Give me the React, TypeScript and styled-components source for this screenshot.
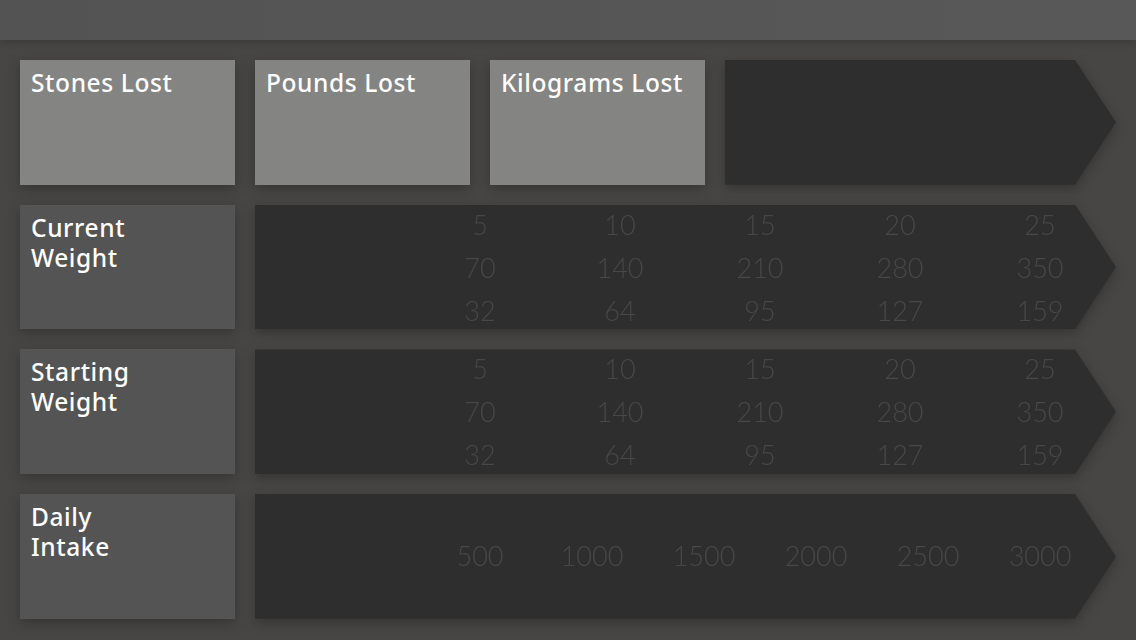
import styled, { createGlobalStyle } from "styled-components";

const GlobalStyle = createGlobalStyle`
    html, body {
        margin: 0;
        padding: 0;
        background: #474644;
    }
    * {
        box-sizing: border-box;
    }
`

const units = [
    ["5", "10", "15", "20", "25"],
    ["70", "140", "210", "280", "350"],
    ["32", "64", "95", "127", "159"],
]

const calories = ["500", "1000", "1500", "2000", "2500", "3000"]

const rows = ["Current Weight", "Starting Weight"]

const Scale = () => (
    <NumberGrid $cols={5} $colWidth={140} $offset={155}>
        {units.flat().map((n, i) => (
            <Num key={i}>{n}</Num>
        ))}
    </NumberGrid>
)

export default function App() {
    return (
        <Page>
            <GlobalStyle/>
            <TopBar/>
            <Content>
                <Row>
                    <Card $tone="light">Stones Lost</Card>
                    <Card $tone="light">Pounds Lost</Card>
                    <Card $tone="light">Kilograms Lost</Card>
                    <ArrowWrap>
                        <Arrow/>
                    </ArrowWrap>
                </Row>
                {rows.map(label => {
                    const [a, b] = label.split(" ")
                    return (
                        <Row key={label}>
                            <Card $tone="dark">{a}<br/>{b}</Card>
                            <ArrowWrap>
                                <Arrow>
                                    <Scale/>
                                </Arrow>
                            </ArrowWrap>
                        </Row>
                    )
                })}
                <Row>
                    <Card $tone="dark">Daily<br/>Intake</Card>
                    <ArrowWrap>
                        <Arrow $center>
                            <NumberGrid $cols={6} $colWidth={112} $offset={169}>
                                {calories.map(c => <Num key={c}>{c}</Num>)}
                            </NumberGrid>
                        </Arrow>
                    </ArrowWrap>
                </Row>
            </Content>
        </Page>
    );
}

const Page = styled.div`
    width: 1136px;
    height: 640px;
    background: #474644;
    overflow: hidden;
`

const TopBar = styled.div`
    height: 40px;
    background: linear-gradient(90deg, #535353, #585858);
    box-shadow: 0 2px 8px rgba(0, 0, 0, 0.2);
    position: relative;
    z-index: 1;
`

const Content = styled.div`
    display: flex;
    flex-direction: column;
    gap: 20px;
    padding: 20px 20px 0 20px;
`

const Row = styled.div`
    display: flex;
    gap: 20px;
    height: 124.7px;
`

const Card = styled.div<{ $tone: "light" | "dark" }>`
    flex: 0 0 215px;
    padding: 8px 11px;
    background: ${p => p.$tone === "light" ? "#848482" : "#545454"};
    color: #ffffff;
    font-family: "Noto Sans", sans-serif;
    font-size: 24.5px;
    font-weight: 500;
    letter-spacing: 0.6px;
    line-height: 30px;
    box-shadow: 0 4px 12px rgba(0, 0, 0, 0.25);
`

const ArrowWrap = styled.div`
    flex: 1;
    filter: drop-shadow(0 4px 6px rgba(0, 0, 0, 0.25));
`

const Arrow = styled.div<{ $center?: boolean }>`
    height: 100%;
    background: #2e2e2e;
    clip-path: polygon(0 0, calc(100% - 41px) 0, 100% 50%, calc(100% - 41px) 100%, 0 100%);
    display: flex;
    align-items: ${p => p.$center ? "center" : "flex-start"};
`

const NumberGrid = styled.div<{ $cols: number; $colWidth: number; $offset: number }>`
    display: grid;
    grid-template-columns: repeat(${p => p.$cols}, ${p => p.$colWidth}px);
    row-gap: 3px;
    margin-left: ${p => p.$offset}px;
`

const Num = styled.span`
    text-align: center;
    line-height: 40px;
    font-family: Lato, sans-serif;
    font-weight: 300;
    font-size: 27px;
    color: #484848;
`
